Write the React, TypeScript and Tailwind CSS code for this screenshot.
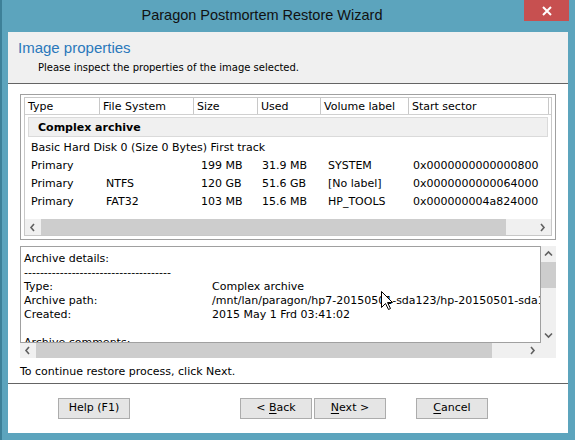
import React from 'react';

const cols = [
  { label: 'Type', w: 'w-[75px]' },
  { label: 'File System', w: 'w-[94px]' },
  { label: 'Size', w: 'w-[64px]' },
  { label: 'Used', w: 'w-[63px]' },
  { label: 'Volume label', w: 'w-[88px]' },
  { label: 'Start sector', w: 'w-[140px]' },
];

// left padding of each data column
const cellPad = ['pl-[6px]', 'pl-[6px]', 'pl-[7px]', 'pl-[4px]', 'pl-[7px]', 'pl-[4px]'];

const partitions = [
  ['Primary', '', '199 MB', '31.9 MB', 'SYSTEM', '0x0000000000000800'],
  ['Primary', 'NTFS', '120 GB', '51.6 GB', '[No label]', '0x0000000000064000'],
  ['Primary', 'FAT32', '103 MB', '15.6 MB', 'HP_TOOLS', '0x000000004a824000'],
];

const details: [string, string][] = [
  ['Archive details:', ''],
  ['-------------------------------------', ''],
  ['Type:', 'Complex archive'],
  ['Archive path:', '/mnt/lan/paragon/hp7-20150501-sda123/hp-20150501-sda1.pbf'],
  ['Created:', '2015 May 1 Frd 03:41:02'],
  ['', ''],
  ['Archive comments:', ''],
];

function Chevron({ dir }: { dir: 'left' | 'right' | 'up' | 'down' }) {
  const pts = {
    left: '5,1 2,4.5 5,8',
    right: '2,1 5,4.5 2,8',
    up: '1,5.5 4.5,2 8,5.5',
    down: '1,2.5 4.5,6 8,2.5',
  }[dir];
  return (
    <svg width="9" height="9" viewBox="0 0 9 9">
      <polyline points={pts} fill="none" stroke="#606060" strokeWidth="1.6" />
    </svg>
  );
}

function HScroll({ thumb }: { thumb: string }) {
  return (
    <div className="flex h-full bg-[#f0f0f0]">
      <div className="w-[16px] flex items-center justify-center">
        <Chevron dir="left" />
      </div>
      <div className={`${thumb} bg-[#cdcdcd]`} />
      <div className="flex-1" />
      <div className="w-[16px] flex items-center justify-center">
        <Chevron dir="right" />
      </div>
    </div>
  );
}

function Button({ children }: { children: React.ReactNode }) {
  return (
    <button
      type="button"
      className="w-[72px] h-[21px] bg-[#e5e5e5] border border-[#acacac] text-[11px] text-black flex items-center justify-center"
    >
      {children}
    </button>
  );
}

export default function App() {
  return (
    <div className="w-[575px] h-[440px] bg-[#5ca4bd] shadow-[inset_2px_0_0_#3d8098] flex flex-col relative overflow-hidden font-['DejaVu_Sans',sans-serif] text-black">
      {/* title bar */}
      <div className="h-[32px] flex shrink-0">
        <div className="flex-1 text-center pt-[5px] leading-[20px] text-[14.5px] text-[#111] font-['Liberation_Sans',sans-serif]">
          Paragon Postmortem Restore Wizard
        </div>
        <div className="w-[45px] h-[21px] mr-[6px] bg-[#c75050] flex items-center justify-center">
          <svg width="10" height="10" viewBox="0 0 10 10">
            <path d="M1 1 L9 9 M9 1 L1 9" stroke="#fff" strokeWidth="2" />
          </svg>
        </div>
      </div>

      {/* client area */}
      <div className="ml-[8px] mr-[7px] mb-[7px] flex-1 flex flex-col bg-white">
        <div className="h-[52px] shrink-0 bg-[#f0f0f0] border-b border-[#646464]">
          <div className="pl-[10px] pt-[7px] leading-[18px] text-[15px] text-[#2a78bb] font-['Liberation_Sans',sans-serif]">
            Image properties
          </div>
          <div className="pl-[30px] mt-[4px] leading-[14px] text-[10px]">
            Please inspect the properties of the image selected.
          </div>
        </div>

        <div className="flex-1 flex flex-col px-[12px] pt-[10px] border-b border-[#646464] text-[11px]">
          {/* partitions list */}
          <div className="h-[146px] shrink-0 border border-[#a0a0a0] pt-[2px] px-[3px] pb-[3px]">
            <div className="h-full border border-[#c8c8c8] flex flex-col overflow-hidden">
              <div className="h-[17px] shrink-0 flex border-b border-[#d0d0d0] whitespace-nowrap">
                {cols.map((c) => (
                  <div key={c.label} className={`${c.w} shrink-0 border-r border-[#c8c8c8] pl-[3px] pt-[3px] flex items-center`}>
                    {c.label}
                  </div>
                ))}
                <div className="w-[20px] shrink-0" />
              </div>
              <div className="mt-[2px] mx-[3px] h-[20px] shrink-0 bg-[#f0f0f0] border border-[#dadada] pl-[9px] pt-[2px] flex items-center font-bold">
                Complex archive
              </div>
              <div className="h-[18px] shrink-0 pl-[6px] pt-[4px] flex items-center whitespace-nowrap">
                Basic Hard Disk 0 (Size 0 Bytes) First track
              </div>
              {partitions.map((row, i) => (
                <div key={i} className="h-[18px] shrink-0 pt-[4px] flex items-center whitespace-nowrap">
                  {row.map((v, j) => (
                    <div key={j} className={`${cols[j].w} ${cellPad[j]} shrink-0`}>
                      {v}
                    </div>
                  ))}
                </div>
              ))}
              <div className="flex-1" />
              <div className="h-[16px] shrink-0">
                <HScroll thumb="w-[465px]" />
              </div>
            </div>
          </div>

          {/* archive details */}
          <div className="mt-[6px] shrink-0 grid grid-cols-[521px_15px] grid-rows-[97px_15px]">
            <div className="border border-[#a0a0a0] px-[3px] pt-[5px] overflow-hidden">
              {details.map(([k, v], i) => (
                <div key={i} className="h-[14px] leading-[14px] flex whitespace-nowrap">
                  <div className="w-[188px] shrink-0">{k}</div>
                  <div>{v}</div>
                </div>
              ))}
            </div>
            <div className="bg-[#f0f0f0] flex flex-col">
              <div className="h-[16px] flex items-center justify-center">
                <Chevron dir="up" />
              </div>
              <div className="h-[26px] bg-[#cdcdcd]" />
              <div className="flex-1" />
              <div className="h-[16px] flex items-center justify-center">
                <Chevron dir="down" />
              </div>
            </div>
            <HScroll thumb="w-[456px]" />
            <div className="bg-[#f0f0f0]" />
          </div>

          <div className="mt-[7px] leading-[14px]">To continue restore process, click Next.</div>
        </div>

        {/* footer buttons */}
        <div className="h-[49px] shrink-0 flex items-start pt-[14px] pl-[50px]">
          <Button>Help (F1)</Button>
          <div className="ml-[110px] flex gap-[2px]">
            <Button>
              &lt;&nbsp;<span className="underline underline-offset-2">B</span>ack
            </Button>
            <Button>
              <span className="underline underline-offset-2">N</span>ext&nbsp;&gt;
            </Button>
          </div>
          <div className="ml-[30px]">
            <Button>
              <span className="underline underline-offset-2">C</span>ancel
            </Button>
          </div>
        </div>
      </div>

      {/* mouse pointer */}
      <svg className="absolute left-[381px] top-[291px]" width="13" height="20" viewBox="0 0 13 20">
        <path d="M0.5 0.5 L0.5 16.5 L4.5 12.5 L7.5 18.5 L9.5 17.5 L6.5 11.5 L11.5 11.5 Z" fill="#fff" stroke="#000" strokeWidth="1" />
      </svg>
    </div>
  );
}
